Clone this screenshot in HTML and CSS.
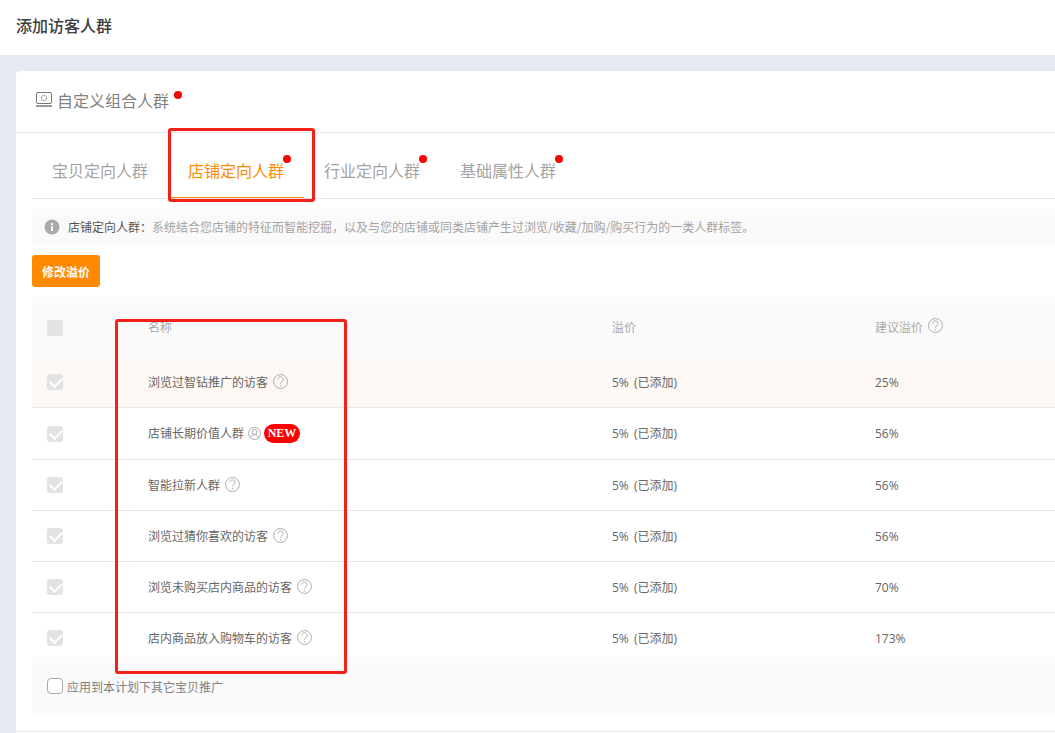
FILE: index.html
```html
<!DOCTYPE html>
<html lang="zh-CN">
<head>
<meta charset="utf-8">
<title>添加访客人群</title>
<link rel="stylesheet" href="styles.css">
</head>
<body>
<svg class="defs" width="0" height="0" aria-hidden="true">
  <symbol id="help" viewBox="0 0 14 14">
    <circle cx="7" cy="7" r="6.500" fill="none" stroke="currentColor" stroke-width=".9"/>
    <path d="M4.500 5.300a2.500 2.500 0 1 1 3.900 2c-.9.600-1.400 1-1.400 2" fill="none" stroke="currentColor" stroke-width=".9"/>
    <circle cx="7" cy="11" r=".7" fill="currentColor"/>
  </symbol>
</svg>
<header class="page-head">添加访客人群</header>
<main class="page-body">
  <section class="card">
    <div class="card-title">
      <svg class="title-icon" viewBox="0 0 16 16" width="16" height="16">
        <rect x=".5" y=".5" width="15" height="11" rx="1.500" fill="none" stroke="#777"/>
        <circle cx="8" cy="6" r="2.600" fill="none" stroke="#888" stroke-width="1.200" stroke-dasharray="1.200 .8"/>
        <path d="M0 14h16" stroke="#777" stroke-width="1.500"/>
      </svg>
      <span class="dotted">自定义组合人群<i class="dot dot-title"></i></span>
    </div>
    <div class="card-content">
      <nav class="tabs">
        <a class="tab">宝贝定向人群</a>
        <a class="tab active"><span class="dotted">店铺定向人群<i class="dot"></i></span></a>
        <a class="tab"><span class="dotted">行业定向人群<i class="dot"></i></span></a>
        <a class="tab"><span class="dotted">基础属性人群<i class="dot"></i></span></a>
      </nav>
      <div class="notice">
        <svg class="notice-icon" viewBox="0 0 16 16" width="16" height="16">
          <circle cx="8" cy="8" r="7.500" fill="#aaa"/>
          <rect x="7" y="7" width="2" height="5" fill="#fff"/>
          <rect x="7" y="4" width="2" height="2" fill="#fff"/>
        </svg>
        <p><b>店铺定向人群：</b>系统结合您店铺的特征而智能挖掘，以及与您的店铺或同类店铺产生过浏览/收藏/加购/购买行为的一类人群标签。</p>
      </div>
      <button class="btn" type="button">修改溢价</button>
      <div class="table">
        <div class="row row-head">
          <span class="check"></span>
          <span>名称</span>
          <span>溢价</span>
          <span class="cell-icon">建议溢价<svg class="help"><use href="#help"/></svg></span>
        </div>
        <div class="row row-hl">
          <span class="check on"></span>
          <span class="cell-icon">浏览过智钻推广的访客<svg class="help"><use href="#help"/></svg></span>
          <span>5% (已添加)</span>
          <span>25%</span>
        </div>
        <div class="row row-new">
          <span class="check on"></span>
          <span class="cell-icon">店铺长期价值人群
            <svg class="person" viewBox="0 0 13 13" width="13" height="13">
              <circle cx="6.500" cy="6.500" r="6" fill="none" stroke="#aaa"/>
              <circle cx="6.500" cy="5" r="2.500" fill="none" stroke="#aaa"/>
              <path d="M2.500 10.800c.6-2 2.200-3.300 4-3.300s3.400 1.300 4 3.300" fill="none" stroke="#aaa"/>
            </svg>
            <em class="badge">NEW</em>
          </span>
          <span>5% (已添加)</span>
          <span>56%</span>
        </div>
        <div class="row row-std">
          <span class="check on"></span>
          <span class="cell-icon">智能拉新人群<svg class="help"><use href="#help"/></svg></span>
          <span>5% (已添加)</span>
          <span>56%</span>
        </div>
        <div class="row row-std">
          <span class="check on"></span>
          <span class="cell-icon">浏览过猜你喜欢的访客<svg class="help"><use href="#help"/></svg></span>
          <span>5% (已添加)</span>
          <span>56%</span>
        </div>
        <div class="row row-std">
          <span class="check on"></span>
          <span class="cell-icon">浏览未购买店内商品的访客<svg class="help"><use href="#help"/></svg></span>
          <span>5% (已添加)</span>
          <span>70%</span>
        </div>
        <div class="row row-last">
          <span class="check on"></span>
          <span class="cell-icon">店内商品放入购物车的访客<svg class="help"><use href="#help"/></svg></span>
          <span>5% (已添加)</span>
          <span>173%</span>
        </div>
        <div class="foot">
          <span class="check open"></span>
          <span>应用到本计划下其它宝贝推广</span>
        </div>
      </div>
    </div>
    <div class="card-end"></div>
  </section>
</main>
<div class="mark mark-tab"></div>
<div class="mark mark-col"></div>
</body>
</html>
```
FILE: styles.css
```css
* { box-sizing: border-box; }
html, body { margin: 0; height: 733px; overflow: hidden; }
body {
  background: #e6e9f2;
  font-family: "Noto Sans CJK SC", "Liberation Sans", sans-serif;
  font-size: 12px;
  color: #666;
  position: relative;
}
.defs { position: absolute; }
.page-head {
  height: 55px;
  background: #fff;
  padding-left: 16px;
  font-size: 16px;
  font-weight: 500;
  line-height: 51px;
  color: #3d3d3d;
}
.page-body { padding: 16px 0 0 16px; }
.card { background: #fff; border-radius: 4px 0 0 0; height: 662px; }
.card-title {
  height: 62px;
  padding: 0 0 3px 20px;
  display: flex;
  align-items: center;
  gap: 5px;
  border-bottom: 1px solid #e8e8e8;
  font-size: 16px;
  color: #808080;
  line-height: 22px;
}
.title-icon { flex: none; }
.dotted { position: relative; display: inline-block; }
.dot {
  position: absolute;
  right: -7px;
  top: -4px;
  width: 8px;
  height: 8px;
  border-radius: 50%;
  background: #f00;
}
.dot-title { right: -13px; top: 2px; }
.card-content { padding: 0 0 0 16px; }
.tabs {
  display: flex;
  height: 66px;
  border-bottom: 1px solid #e6e6e6;
}
.tab {
  width: 136px;
  height: 65px;
  padding: 26px 0 0 20px;
  font-size: 16px;
  line-height: 22px;
  color: #a3a3a3;
}
.tab.active { color: #ff8a00; border-bottom: 1px solid #ff8a00; }
.notice {
  margin-top: 10px;
  height: 36px;
  background: #fafafa;
  display: flex;
  align-items: center;
  padding-left: 12px;
  gap: 8px;
  color: #a3a3a3;
}
.notice p { margin: 0; line-height: 18px; }
.notice b { font-weight: 400; color: #555; }
.notice-icon { flex: none; }
.btn {
  display: block;
  margin-top: 10px;
  width: 68px;
  height: 32px;
  border: 0;
  border-radius: 3px;
  background: #ff8a00;
  color: #fff;
  font: 700 12px "Noto Sans CJK SC", "Liberation Sans", sans-serif;
  padding: 0;
}
.table { margin-top: 10px; }
.row {
  display: grid;
  grid-template-columns: 116px 464px 263px 1fr;
  align-items: center;
  padding: 0;
  border-bottom: 1px solid #e8e8e8;
  font-family: "Open Sans", "Noto Sans CJK SC", sans-serif;
  font-size: 12px;
  line-height: 18px;
  word-spacing: 2px;
}
.row > span:first-child { margin-left: 15px; }
.row-head { height: 61px; background: #fafafa; color: #aaa; border-bottom: 0; font-family: "Noto Sans CJK SC", sans-serif; }
.row-head > span:not(:first-child) { margin-top: -2px; }
.row-hl { height: 50px; background: #fdf8f3; }
.row-hl .check { margin-top: -1px; }
.row-new { height: 52px; }
.row-new .cell-icon { word-spacing: 0; }
.row-std { height: 51px; }
.row-std > span:not(:first-child) { margin-top: 2px; }
.row-last { height: 44px; border-bottom: 0; padding-top: 6px; }
.row-last > span:not(:first-child) { margin-top: 2px; }
.check {
  display: block;
  width: 16px;
  height: 16px;
  border-radius: 3px;
  background: #e3e3e3;
  position: relative;
}
.check.on::after {
  content: "";
  position: absolute;
  left: 3px;
  top: 3px;
  width: 10px;
  height: 6px;
  border-left: 2px solid #fff;
  border-bottom: 2px solid #fff;
  transform: rotate(-45deg);
}
.check.open { background: #fff; border: 1px solid #aaa; border-radius: 4px; flex: none; }
.cell-icon { display: flex; align-items: center; gap: 5px; }
.help { width: 15px; height: 15px; color: #aaa; flex: none; margin-top: -3px; }
.person { flex: none; margin-left: -1px; margin-right: -2px; }
.badge {
  width: 36px;
  height: 19px;
  border-radius: 10px;
  background: #f00;
  color: #fff;
  font: 700 12px/18px "Liberation Serif", serif;
  text-align: center;
}
.foot {
  height: 58px;
  background: #fafafa;
  display: flex;
  align-items: center;
  gap: 4px;
  padding-left: 15px;
  color: #808080;
}
.card-end { margin-top: 16px; border-top: 1px solid #e8e8e8; }
.mark {
  position: absolute;
  border: 3px solid #f5201a;
  border-radius: 3px;
}
.mark-tab { left: 168px; top: 128px; width: 147px; height: 74px; }
.mark-col { left: 115px; top: 319px; width: 232px; height: 355px; }
```
